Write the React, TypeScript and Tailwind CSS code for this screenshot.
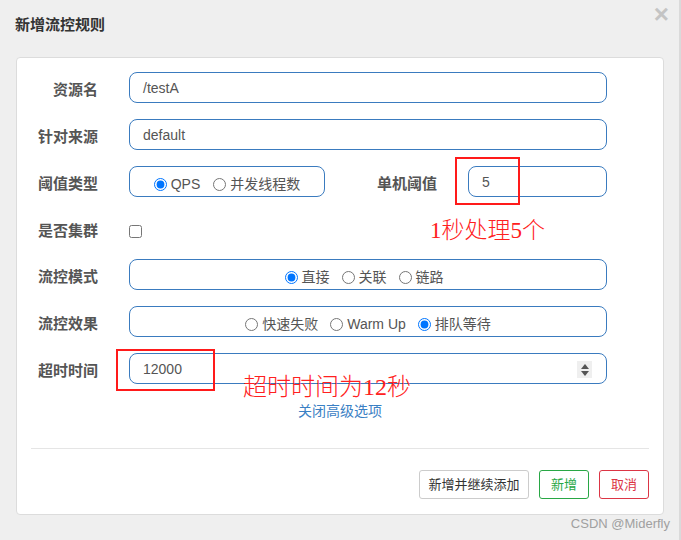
import React from "react";

const font = "font-['Liberation_Sans','Noto_Sans_CJK_SC',sans-serif]";

const Label = ({ text, width = "w-[81px]", pad = "pt-[6px]" }: { text: string; width?: string; pad?: string }) => (
    <div className={`${width} ${pad} shrink-0 text-right text-[15px] font-bold text-[#555]`}>{text}</div>
);

const Radio = ({ name, label, checked }: { name: string; label: string; checked?: boolean }) => (
    <label className="flex items-center gap-[4px] text-[14px] text-[#555]">
        <input type="radio" name={name} defaultChecked={checked} className="m-0 w-[13px] h-[13px]" />
        <span>{label}</span>
    </label>
);

const inputCls =
    "h-[31px] rounded-[8px] border border-[#3a7bbf] bg-white pl-[13px] pt-[1px] text-[14px] text-[#555] flex items-center";

const groupCls = "h-[31px] rounded-[8px] border border-[#3a7bbf] flex items-center justify-center pt-[6px]";

export default function App() {
    return (
        <div className={`relative w-[681px] h-[540px] bg-[#efefef] border-r-2 border-[#dadada] ${font}`}>
            {/* header */}
            <div className="h-[57px] pl-[15px] pt-[15px]">
                <h4 className="text-[15px] leading-[20px] font-bold text-[#333]">新增流控规则</h4>
            </div>
            <button className="absolute right-[10px] top-[1px] text-[26px] leading-[26px] font-bold text-[#c4c4c4]">
                ×
            </button>

            {/* body card */}
            <div className="mx-[16px] w-[648px] h-[458px] bg-white border border-[#dcdcdc] rounded-[4px] flex flex-col pt-[14px]">
                <div className="flex flex-col gap-[16px]">
                    <div className="flex items-center h-[31px]">
                        <Label text="资源名" />
                        <div className={`${inputCls} ml-[31px] w-[478px]`}>/testA</div>
                    </div>
                    <div className="flex items-center h-[31px]">
                        <Label text="针对来源" />
                        <div className={`${inputCls} ml-[31px] w-[478px]`}>default</div>
                    </div>
                    <div className="flex items-center h-[31px]">
                        <Label text="阈值类型" />
                        <div className={`${groupCls} ml-[31px] w-[196px] gap-[13px]`}>
                            <Radio name="grade" label="QPS" checked />
                            <Radio name="grade" label="并发线程数" />
                        </div>
                        <Label text="单机阈值" width="w-[112px]" />
                        <div className={`${inputCls} ml-[31px] w-[139px]`}>5</div>
                    </div>
                    <div className="flex items-center h-[30px] pt-[6px]">
                        <Label text="是否集群" pad="pt-0" />
                        <input type="checkbox" className="ml-[31px] m-0 w-[13px] h-[13px]" />
                    </div>
                    <div className="flex items-center h-[31px]">
                        <Label text="流控模式" />
                        <div className={`${groupCls} ml-[31px] w-[478px] gap-[12px] pr-[8px]`}>
                            <Radio name="strategy" label="直接" checked />
                            <Radio name="strategy" label="关联" />
                            <Radio name="strategy" label="链路" />
                        </div>
                    </div>
                    <div className="flex items-center h-[31px]">
                        <Label text="流控效果" />
                        <div className={`${groupCls} ml-[31px] w-[478px] gap-[12px]`}>
                            <Radio name="behavior" label="快速失败" />
                            <Radio name="behavior" label="Warm Up" />
                            <Radio name="behavior" label="排队等待" checked />
                        </div>
                    </div>
                    <div className="flex items-center h-[31px]">
                        <Label text="超时时间" />
                        <div className={`${inputCls} ml-[31px] w-[478px] relative`}>
                            12000
                            <div className="absolute right-[14px] top-[7px] w-[15px] h-[17px] bg-[#efefef] flex flex-col items-center justify-center gap-[2px]">
                                <svg width="8" height="5" viewBox="0 0 8 5">
                                    <path d="M4 0 L8 5 L0 5 Z" fill="#555" />
                                </svg>
                                <svg width="8" height="5" viewBox="0 0 8 5">
                                    <path d="M0 0 L8 0 L4 5 Z" fill="#555" />
                                </svg>
                            </div>
                        </div>
                    </div>
                </div>

                <div className="mt-[17px] text-center text-[14px] leading-[20px] text-[#3a80c4]">关闭高级选项</div>

                <div className="mx-[14px] mt-[27px] border-t border-[#e5e5e5]" />

                <div className="flex justify-end gap-[10px] pr-[14px] mt-[21px]">
                    <button className="h-[29px] w-[110px] rounded-[3px] border border-[#cccccc] text-[13px] text-[#333] bg-white">
                        新增并继续添加
                    </button>
                    <button className="h-[29px] w-[50px] rounded-[3px] border border-[#28a745] text-[13px] text-[#28a745] bg-white">
                        新增
                    </button>
                    <button className="h-[29px] w-[50px] rounded-[3px] border border-[#dc3545] text-[13px] text-[#dc3545] bg-white">
                        取消
                    </button>
                </div>
            </div>

            {/* annotations */}
            <div className="absolute left-[455px] top-[157px] w-[65px] h-[48px] border-2 border-[#ff1a1a]" />
            <div className="absolute left-[430px] top-[216px] text-[23px] leading-[30px] text-[#ff2020] font-['Liberation_Serif','Noto_Sans_CJK_SC',serif] font-light">
                1秒处理5个
            </div>
            <div className="absolute left-[116px] top-[349px] w-[99px] h-[42px] border-2 border-[#ff1a1a]" />
            <div className="absolute left-[243px] top-[371px] text-[24px] leading-[32px] text-[#ff2020] font-['Liberation_Serif','Noto_Sans_CJK_SC',serif] font-light">
                超时时间为12秒
            </div>

            <div className="absolute right-[9px] top-[514px] text-[13px] text-[#a0a0a0]">CSDN @Miderfly</div>
        </div>
    );
}
